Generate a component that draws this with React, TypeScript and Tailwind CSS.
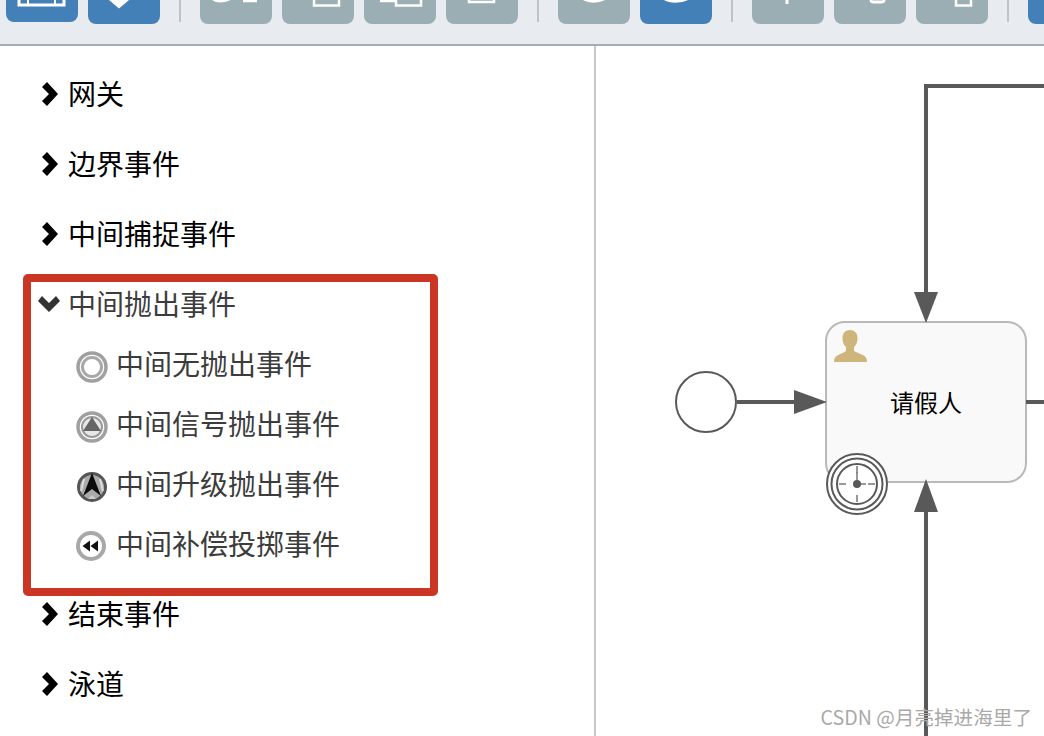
import React from 'react';

const cjk = "font-['Noto_Sans_CJK_SC','Liberation_Sans',sans-serif]";

const ToolButton: React.FC<{ active?: boolean; up?: boolean; children?: React.ReactNode }> = ({ active, up, children }) => (
  <div
    className={`w-[72px] h-[60px] shrink-0 rounded-[8px] overflow-hidden flex items-end justify-center ${
      active ? 'bg-[#4480b8]' : 'bg-[#9aaeb4]'
    } ${up ? 'mb-[2px]' : ''}`}
  >
    {children}
  </div>
);

const Sep = () => <div className="w-[2px] h-[40px] bg-[#bfc4cc] shrink-0 mx-[19px] mb-[2px]" />;

// the icons are cut off by the top of the picture, only their lower ends show
const Icon: React.FC<{ children: React.ReactNode }> = ({ children }) => (
  <svg width="72" height="24" viewBox="0 0 72 24" fill="none" stroke="white" strokeWidth="2.5" className="shrink-0">
    {children}
  </svg>
);

const Toolbar = () => (
  <div className="h-[46px] bg-[#e8ebf0] border-b-2 border-[#a3adb6] overflow-hidden flex items-end pb-[20px] pl-[6px] shrink-0">
    <div className="flex items-end gap-[10px]">
      <ToolButton active up>
        <svg width="72" height="22" viewBox="0 0 72 22" fill="none" stroke="white" strokeWidth="3">
          <path d="M13 0v5h45V0" />
          <path d="M22 0v5h27V0" strokeWidth="2" />
        </svg>
      </ToolButton>
      <ToolButton active>
        <Icon>
          <path d="M21 0h20L31 8.500z" fill="white" stroke="none" />
        </Icon>
      </ToolButton>
    </div>
    <Sep />
    <div className="flex items-end gap-[10px]">
      <ToolButton>
        <Icon>
          <path d="M13-1c3 3 12 3 17 0M43 1h14" />
        </Icon>
      </ToolButton>
      <ToolButton>
        <Icon>
          <path d="M32 0v5.500h25V0" />
        </Icon>
      </ToolButton>
      <ToolButton>
        <Icon>
          <path d="M16 1h15M32 0v5.500h25V0" />
        </Icon>
      </ToolButton>
      <ToolButton>
        <Icon>
          <path d="M23 0v2h25V0" />
        </Icon>
      </ToolButton>
    </div>
    <Sep />
    <div className="flex items-end gap-[10px]">
      <ToolButton>
        <Icon>
          <path d="M26-1c5 3 14 3 20 0" strokeWidth="3" />
        </Icon>
      </ToolButton>
      <ToolButton active>
        <Icon>
          <path d="M25-1c5 3 16 3 22 0" strokeWidth="3" />
        </Icon>
      </ToolButton>
    </div>
    <Sep />
    <div className="flex items-end gap-[10px]">
      <ToolButton>
        <Icon>
          <path d="M35 0v4" strokeWidth="3" />
        </Icon>
      </ToolButton>
      <ToolButton>
        <Icon>
          <path d="M37 0c0 2 1 2 3 2h7c2 0 3 0 3-2" strokeWidth="3" />
        </Icon>
      </ToolButton>
      <ToolButton>
        <Icon>
          <path d="M40 0v5.500h15V0" />
        </Icon>
      </ToolButton>
    </div>
    <Sep />
    <ToolButton active />
  </div>
);

const ChevronRight = () => (
  <svg width="20" height="24" viewBox="0 0 20 24" className="shrink-0 mt-[2px]">
    <path d="M2 5 7 0l11 12L7 24l-5-5 7-7z" fill="#000" />
  </svg>
);

const ChevronDown = () => (
  <svg width="24" height="18" viewBox="0 0 24 18" className="shrink-0 mt-[2px]">
    <path d="M5 1 1 6l11 11L23 6l-4-5-7 7z" fill="#333" />
  </svg>
);

const Row: React.FC<{ label: string }> = ({ label }) => (
  <div className="h-[70px] pl-[40px] flex items-center gap-[8px] text-[28px] text-black">
    <ChevronRight />
    <span>{label}</span>
  </div>
);

const NoneIcon = () => (
  <svg width="32" height="32" viewBox="0 0 32 32" className="blur-[0.7px] shrink-0 mt-[8px]">
    <circle cx="16" cy="16" r="14" fill="#fff" stroke="#a0a0a0" strokeWidth="3.500" />
    <circle cx="16" cy="16" r="9.500" fill="#fff" stroke="#a8a8a8" strokeWidth="3" />
  </svg>
);

const SignalIcon = () => (
  <svg width="32" height="32" viewBox="0 0 32 32" className="blur-[0.7px] shrink-0 mt-[8px]">
    <circle cx="16" cy="16" r="14" fill="#fff" stroke="#a0a0a0" strokeWidth="3.500" />
    <circle cx="16" cy="16" r="10" fill="#e8e8e8" stroke="#999" strokeWidth="2" />
    <path d="M16 6 25 20H7z" fill="#666" />
  </svg>
);

const EscalationIcon = () => (
  <svg width="32" height="32" viewBox="0 0 32 32" className="blur-[0.7px] shrink-0 mt-[8px]">
    <circle cx="16" cy="16" r="13.500" fill="#aaa" stroke="#555" strokeWidth="3" />
    <path d="M8 8 5 20M24 8l3 12" stroke="#ddd" strokeWidth="2" />
    <path d="M16 24l-4 4h8z" fill="#ccc" />
    <path d="M16 2 25 25l-9-7-9 7z" fill="#0c0c0c" />
  </svg>
);

const CompensationIcon = () => (
  <svg width="32" height="32" viewBox="0 0 32 32" className="blur-[0.6px] shrink-0 mt-[8px]">
    <circle cx="15" cy="15" r="13" fill="#fff" stroke="#a8a8a8" strokeWidth="4" />
    <path d="M14 9.500v11L6.500 15zM22 9.500v11L14.500 15z" fill="#111" />
  </svg>
);

const SubRow: React.FC<{ icon: React.ReactNode; label: string }> = ({ icon, label }) => (
  <div className="h-[60px] pl-[76px] flex items-center gap-[9px] text-[28px] text-[#3c3c3c]">
    {icon}
    <span className="-ml-px">{label}</span>
  </div>
);

const Palette = () => (
  <div className="relative w-[596px] shrink-0 border-r-2 border-[#c6c8cc] pt-[12px] overflow-hidden">
    <Row label="网关" />
    <Row label="边界事件" />
    <Row label="中间捕捉事件" />
    <div className="mt-[5px] mb-[5px]">
      <div className="h-[60px] pl-[37px] flex items-center gap-[7px] text-[28px] text-[#3c3c3c]">
        <ChevronDown />
        <span>中间抛出事件</span>
      </div>
      <SubRow icon={<NoneIcon />} label="中间无抛出事件" />
      <SubRow icon={<SignalIcon />} label="中间信号抛出事件" />
      <SubRow icon={<EscalationIcon />} label="中间升级抛出事件" />
      <SubRow icon={<CompensationIcon />} label="中间补偿投掷事件" />
    </div>
    <Row label="结束事件" />
    <Row label="泳道" />
    {/* red annotation frame */}
    <div className="absolute left-[23px] top-[228px] w-[415px] h-[322px] border-[8px] border-[#cb3524] rounded-[5px]" />
  </div>
);

const Canvas = () => (
  <div className="relative flex-1 overflow-hidden bg-white">
    {/* task node */}
    <div className="absolute left-[229px] top-[275px] w-[202px] h-[162px] rounded-[20px] border-2 border-[#b9b9b9] bg-[#f9f9f9] flex items-center justify-center text-[24px] text-black">
      <span className="-mt-[1px]">请假人</span>
      <svg width="34" height="34" viewBox="0 0 34 34" className="absolute left-[6px] top-[6px]">
        <path
          d="M17 1c4.500 0 7.500 3 7.500 8 0 4-1 7-3.500 9v4c3 2 8 3 10.500 5 1.500 1 2.500 3 2.500 6H1c0-3 1-5 2.500-6C6 25 11 24 13 22v-4c-2.500-2-3.500-5-3.500-9 0-5 3-8 7.500-8z"
          fill="#ceb57c"
        />
      </svg>
    </div>
    {/* origin of this canvas is x=596, y=46 */}
    <svg width="448" height="690" viewBox="596 46 448 690" className="absolute left-0 top-0">
      <g fill="none" stroke="#595959" strokeWidth="4">
        <path d="M1044 86H926v210" />
        <path d="M737 402h60" />
        <path d="M926 510v226" />
        <path d="M1026 402h18" />
      </g>
      <g fill="#595959">
        <path d="M914 292h24l-12 31z" />
        <path d="M794 390v24l33-12z" />
        <path d="M914 512h24l-12-33z" />
      </g>
      <circle cx="706" cy="402" r="30" fill="#fff" stroke="#595959" strokeWidth="2" />
    </svg>
    {/* timer boundary event */}
    <svg width="64" height="64" viewBox="0 0 64 64" className="absolute left-[229px] top-[406px]">
      <circle cx="32" cy="32" r="30" fill="#fff" stroke="#595959" strokeWidth="2" />
      <circle cx="32" cy="32" r="25.500" fill="#fff" stroke="#595959" strokeWidth="2" />
      <circle cx="32" cy="32" r="20" fill="#fff" stroke="#595959" strokeWidth="2" />
      <path d="M32 14v7M32 43v7M14 32h7M43 32h7" stroke="#777" strokeWidth="1.500" />
      <path d="M32 20v12h9" stroke="#777" strokeWidth="1.500" fill="none" />
      <circle cx="32" cy="32" r="4" fill="#595959" />
    </svg>
    {/* watermark */}
    <div className="absolute right-[12px] bottom-[5px] text-[19.6px] leading-[28px] text-[#a9a9a9] whitespace-nowrap">
      CSDN @月亮掉进海里了
    </div>
  </div>
);

const App: React.FC = () => (
  <div className={`w-[1044px] h-[736px] flex flex-col overflow-hidden bg-white ${cjk}`}>
    <Toolbar />
    <div className="flex flex-1 min-h-0">
      <Palette />
      <Canvas />
    </div>
  </div>
);

export default App;
